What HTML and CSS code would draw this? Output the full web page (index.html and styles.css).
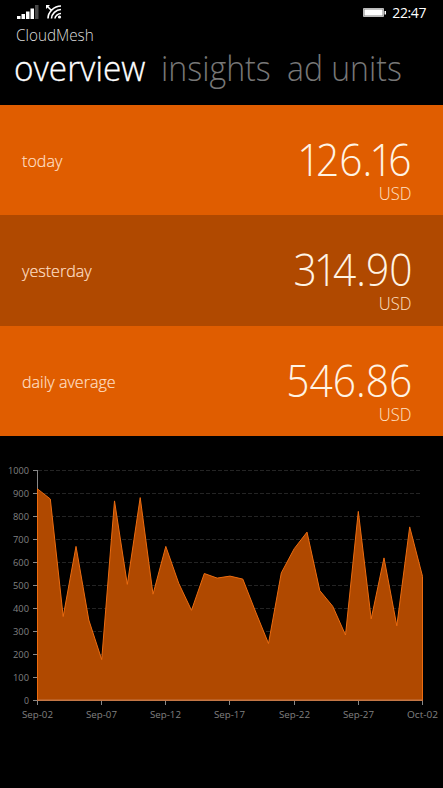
FILE: index.html
```
<!DOCTYPE html>
<html lang="en">
<head>
<meta charset="utf-8">
<title>CloudMesh</title>
<link rel="stylesheet" href="styles.css">
</head>
<body>
<header class="status">
  <svg class="signal" width="46" height="16" viewBox="0 0 46 16">
    <g fill="#fff"><path d="M0 12h3.500v3H0zM4.500 10h3.500v5h-3.500zM9 7.500h3.500v7.500H9zM13.500 4.500h3.500v10.500h-3.500z"/><path d="M18 1h3.500v14h-3.500z" fill="#484848"/></g>
    <g fill="none" stroke="#fff" stroke-width="1.600"><path d="M31 14.500C31 8 37 2 44 2M34.500 14.500C34.500 10 39 5.500 44 5.500M38 14.500C38 12 41 9.500 44 9.500M30 2l4 4"/></g>
    <path d="M29 1h4l-4 4z" fill="#fff"/><circle cx="42.500" cy="13" r="1.600" fill="#fff"/>
  </svg>
  <div class="right">
    <svg width="24" height="10" viewBox="0 0 24 10"><path d="M.5.500h20v8H.500z" fill="#888" stroke="#bbb"/><path d="M1.500 1.500h18v6h-18z" fill="#fff"/><path d="M21.500 3H23v3.500h-1.500z" fill="#fff"/></svg>
    <span class="time">22:47</span>
  </div>
</header>
<div class="app"><span>CloudMesh</span></div>
<nav class="tabs"><span class="tab t1 active">overview</span><span class="tab t2">insights</span><span class="tab t3">ad units</span></nav>
<main>
  <section class="row"><span class="label">today</span><div class="amount"><span class="num"><span class="one">1</span>26.<span class="one">1</span>6</span><span class="cur">USD</span></div></section>
  <section class="row dark"><span class="label">yesterday</span><div class="amount"><span class="num">3<span class="one">1</span>4.90</span><span class="cur">USD</span></div></section>
  <section class="row"><span class="label">daily average</span><div class="amount"><span class="num">546.86</span><span class="cur">USD</span></div></section>
  <svg class="chart" id="chart" width="443" height="352" viewBox="0 436 443 352"></svg>
</main>
<script src="chart.js"></script>
</body>
</html>
```
FILE: styles.css
```
body { margin: 0; width: 443px; height: 788px; overflow: hidden; background: #000; color: #fff; font-family: "Open Sans", "Noto Sans", sans-serif; }
.status { height: 25px; display: flex; justify-content: space-between; padding: 4px 17px 0 17px; box-sizing: border-box; }
.right { display: flex; gap: 5px; }
.right svg { margin-top: 4px; }
.time { font-size: 14px; line-height: 17px; letter-spacing: -0.400px; }
.app { height: 20px; padding-left: 16px; font-size: 16px; line-height: 20px; font-weight: 300; color: #ddd; }
.app span, .tab, .num, .cur, .label { display: inline-block; transform-origin: 0 50%; white-space: nowrap; }
.app span { transform: scaleX(.955); }
.tabs { height: 60px; display: flex; padding-left: 14px; font-size: 34px; line-height: 46px; font-weight: 300; color: #777; }
.active { color: #fff; -webkit-text-stroke: .3px #fff; }
.t1 { width: 147px; transform: scaleX(.98); }
.t2 { width: 126px; transform: scaleX(.945); }
.t3 { transform: scaleX(.94); }
.row { height: 110.400px; background: #e05d00; display: flex; justify-content: space-between; padding: 0 31px 0 22px; }
.dark { background: #b04900; }
.label { font-size: 16px; line-height: 22px; margin-top: 45px; color: #ffdfc4; transform: scaleX(1.005); font-weight: 300; -webkit-text-stroke: .2px #ffdfc4; }
.amount { display: flex; flex-direction: column; align-items: flex-end; padding-top: 30px; }
.num { font-size: 45px; line-height: 48px; font-weight: 300; color: #fff4e4; transform: scaleX(.905); transform-origin: 100% 50%; }
.one { margin: 0 -4.900px 0 -2.900px; }
.cur { font-size: 18px; line-height: 20px; font-weight: 300; margin-right: 1px; color: #ffe3c8; transform: scaleX(.92); transform-origin: 100% 50%; }
.chart { display: block; }
.grid { stroke: #242424; stroke-dasharray: 4 2; }
.area { fill: #b04900; }
.line { fill: none; stroke: #ec6c10; }
.axis { stroke: #888; }
.base { stroke: #c47645; stroke-width: 1.500; }
.chart text { font-size: 9px; fill: #808080; }
```
FILE: chart.js
```
const values = [920, 876, 365, 670, 350, 178, 868, 505, 882, 462, 670, 510, 392, 552, 532, 541, 528, 385, 248, 555, 660, 732, 478, 410, 285, 822, 355, 620, 325, 755, 540];
const dates = ['Sep-02', 'Sep-07', 'Sep-12', 'Sep-17', 'Sep-22', 'Sep-27', 'Oct-02'];
const px = i => 37.5 + i * 12.833;
const py = v => 700.5 - v * 0.23;
const points = values.map((v, i) => `${px(i).toFixed(1)},${py(v).toFixed(1)}`).join(' ');
let grid = '', ticks = '', labels = '';
for (let v = 0; v <= 1000; v += 100) {
  const y = Math.floor(py(v)) + 0.5;
  if (v) grid += `<path class="grid" d="M38 ${y}H422"/>`;
  ticks += `<path class="axis" d="M33 ${y}H37"/>`;
  labels += `<text x="29" y="${y + 3.5}" text-anchor="end" textLength="${v === 1000 ? 21 : v ? 16 : 5}" lengthAdjust="spacingAndGlyphs">${v}</text>`;
}
dates.forEach((d, i) => {
  const x = Math.floor(px(i * 5)) + 0.5;
  ticks += `<path class="axis" d="M${x} 701V705"/>`;
  labels += `<text x="${x}" y="718" text-anchor="middle" textLength="31" lengthAdjust="spacingAndGlyphs">${d}</text>`;
});
document.getElementById('chart').innerHTML =
  `${grid}<polygon class="area" points="37.5,700.5 ${points} 422.5,700.5"/>` +
  `<path class="axis" d="M37.5 470V700"/><polyline class="line" points="37.5,700.5 ${points} 422.5,700.5"/>` +
  `<path class="base" d="M37 700.2H423"/>${ticks}${labels}`;
```
